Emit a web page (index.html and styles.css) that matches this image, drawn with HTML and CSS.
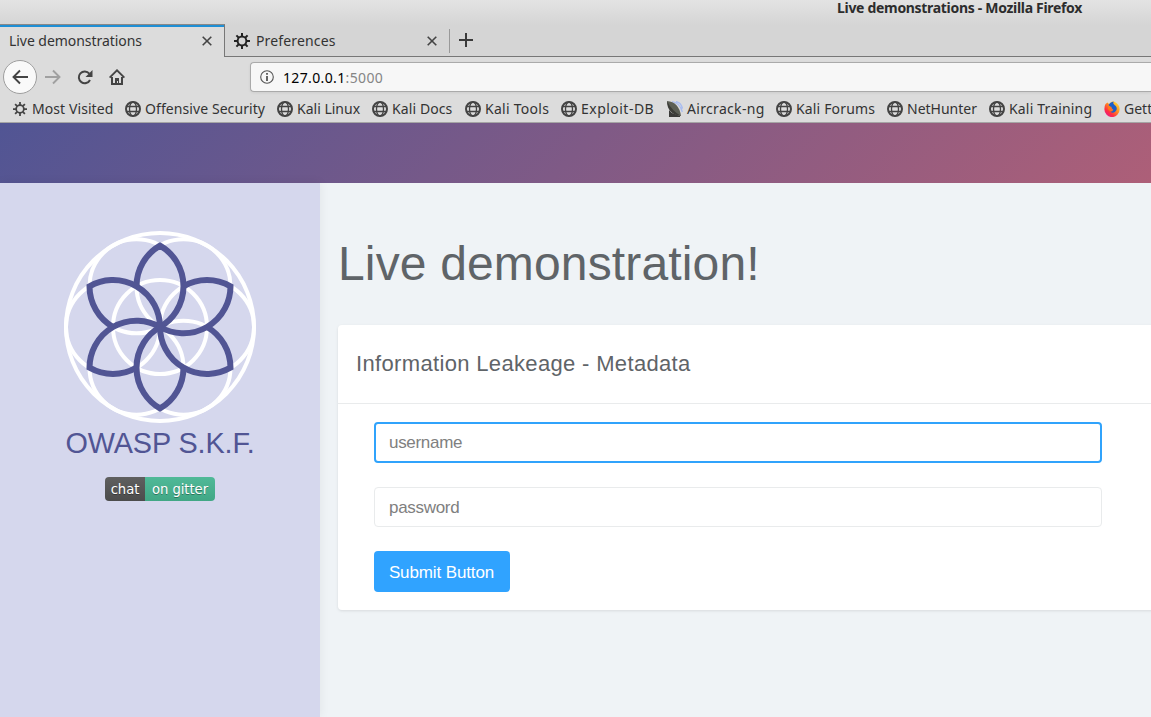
FILE: index.html
```html
<!DOCTYPE html>
<html lang="en">
<head>
<meta charset="utf-8">
<title>Live demonstrations</title>
<link rel="stylesheet" href="styles.css">
</head>
<body>
<svg class="defs" aria-hidden="true">
  <symbol id="globe" viewBox="0 0 16 16"><g fill="none" stroke="currentColor"><circle cx="8" cy="8" r="7" stroke-width="2"/><ellipse cx="8" cy="8" rx="3.5" ry="7" stroke-width="1.3"/><path d="M1.5 5.500h13M1.5 10.500h13" stroke-width="1.3"/></g></symbol>
  <symbol id="gear" viewBox="0 0 16 16"><g fill="none" stroke="currentColor" stroke-width="2"><circle cx="8" cy="8" r="4.400"/><path d="M8 0v3.500M8 12.500v3.500M0 8h3.500M12.500 8h3.500M2.400 2.400l2.400 2.400M11.200 11.200l2.400 2.400M13.600 2.400l-2.400 2.400M4.800 11.200l-2.400 2.400"/></g></symbol>
  <symbol id="close" viewBox="0 0 10 10"><path d="M.7.7l8.600 8.600M9.300.7L.7 9.300" fill="none" stroke="currentColor" stroke-width="1.600"/></symbol>
</svg>
<div class="titlebar"><span class="window-title">Live demonstrations - Mozilla Firefox</span></div>
<div class="tabs">
  <div class="tab active"><span class="tab-label">Live demonstrations</span><svg class="x"><use href="#close"/></svg></div>
  <div class="tab"><svg class="ico dark"><use href="#gear"/></svg><span class="tab-label wide">Preferences</span><svg class="x"><use href="#close"/></svg></div>
  <div class="newtab"><svg viewBox="0 0 14 14"><path d="M7 0v14M0 7h14" stroke="#3a3a3a" stroke-width="2"/></svg></div>
</div>
<div class="nav">
  <div class="back"><svg class="ico" viewBox="0 0 16 16"><path d="M16 8H1.500M8 1.500L1.500 8L8 14.500" fill="none" stroke="#444" stroke-width="1.900"/></svg></div>
  <svg class="ico fwd" viewBox="0 0 16 16"><path d="M0 8h14.500M8 1.500L14.500 8L8 14.500" fill="none" stroke="#a0a0a0" stroke-width="1.900"/></svg>
  <svg class="ico reload" viewBox="0 0 16 16"><path d="M12.300 4.600A5.900 5.900 0 1 0 13 11" fill="none" stroke="#444" stroke-width="2"/><path d="M15.500 1v7h-7z" fill="#444"/></svg>
  <svg class="ico home" viewBox="0 0 16 16"><path d="M.6 8.700L8 1.300l7.400 7.400" fill="none" stroke="#444" stroke-width="1.900"/><path d="M3 8v7h10V8" fill="none" stroke="#444" stroke-width="2"/><path d="M6 9h4v6H6z" fill="#444"/><path d="M8 12h1v2H8z" fill="#ddd"/></svg>
  <div class="url"><svg class="info" viewBox="0 0 14 14"><circle cx="7" cy="7" r="6.300" fill="none" stroke="#555" stroke-width="1.100"/><path d="M7 3v1.800M7 6v5" stroke="#555" stroke-width="1.800"/></svg><span class="addr">127.0.0.1<i>:5000</i></span></div>
</div>
<div class="bookmarks">
  <div class="bm visited"><svg class="ico"><use href="#gear"/></svg><span>Most Visited</span></div>
  <div class="bm security"><svg class="ico"><use href="#globe"/></svg><span>Offensive Security</span></div>
  <div class="bm linux"><svg class="ico"><use href="#globe"/></svg><span>Kali Linux</span></div>
  <div class="bm docs"><svg class="ico"><use href="#globe"/></svg><span>Kali Docs</span></div>
  <div class="bm tools"><svg class="ico"><use href="#globe"/></svg><span>Kali Tools</span></div>
  <div class="bm exploit"><svg class="ico"><use href="#globe"/></svg><span>Exploit-DB</span></div>
  <div class="bm aircrack"><svg class="ico" viewBox="0 0 16 16"><path d="M5 .7Q13 2 15.300 11M9 .5q5 1 6.500 7" fill="none" stroke="#a9bdf0" stroke-width="1.300"/><path d="M0 0Q12 1 14 15L9 14Q1 10 0 0" fill="#5c5f56"/><path d="M0 0Q0 13 14 15Q5 10 0 0" fill="#3c3d38"/><path d="M2 9l3 3l8 3v1H2z" fill="#3a3a38"/></svg><span>Aircrack-ng</span></div>
  <div class="bm forums"><svg class="ico"><use href="#globe"/></svg><span>Kali Forums</span></div>
  <div class="bm hunter"><svg class="ico"><use href="#globe"/></svg><span>NetHunter</span></div>
  <div class="bm training"><svg class="ico"><use href="#globe"/></svg><span>Kali Training</span></div>
  <div class="bm"><svg class="ico" viewBox="0 0 16 16"><defs><linearGradient id="fx" x1="1" y1="0" x2=".2" y2="1"><stop offset="0" stop-color="#fff044"/><stop offset=".45" stop-color="#ff9020"/><stop offset=".75" stop-color="#ff3040"/><stop offset="1" stop-color="#e8158c"/></linearGradient></defs><path d="M1.500 3l2-1.500L5 3l3-2.500h2q6 3 5.600 8a7.500 7.500 0 0 1-15.200 0Q.3 5 1.500 3z" fill="url(#fx)"/><path d="M4.500 4q1.500-3 5-3.500q-1 2 1 3.500q3 2 2 5q-2 4-6 2l3-2z" fill="#1b5fc8"/><path d="M4 5l4 1-2 2 3 2q-3 1-5-2z" fill="#ff7a18"/></svg><span>Gett</span></div>
</div>
<div class="banner"></div>
<div class="page">
  <aside class="side">
    <svg class="logo" viewBox="-96 -96 192 192">
      <defs><path id="petal" d="M-23.500-40.700A47 47 0 0 1 0-81.400A47 47 0 0 1 0 0"/></defs>
      <g fill="none" stroke="#fff" stroke-width="4"><circle r="94"/><circle r="47"/><circle cx="47" r="47"/><circle cx="-47" r="47"/><circle cx="23.500" cy="-40.700" r="47"/><circle cx="-23.500" cy="-40.700" r="47"/><circle cx="23.500" cy="40.700" r="47"/><circle cx="-23.500" cy="40.700" r="47"/></g>
      <g fill="none" stroke="#515594" stroke-width="6"><use href="#petal"/><use href="#petal" transform="rotate(60)"/><use href="#petal" transform="rotate(120)"/><use href="#petal" transform="rotate(180)"/><use href="#petal" transform="rotate(240)"/><use href="#petal" transform="rotate(300)"/></g>
    </svg>
    <div class="brand">OWASP S.K.F.</div>
    <div class="badge"><span class="chat">chat</span><span class="gitter">on gitter</span></div>
  </aside>
  <main class="main">
    <h1>Live demonstration!</h1>
    <section class="card">
      <h2>Information Leakeage - Metadata</h2>
      <form class="form">
        <input class="field focus" type="text" placeholder="username">
        <input class="field" type="password" placeholder="password">
        <button class="submit" type="button">Submit Button</button>
      </form>
    </section>
  </main>
</div>
</body>
</html>
```
FILE: styles.css
```css
* { box-sizing: border-box; }
body { margin: 0; width: 1151px; height: 717px; overflow: hidden; display: flex; flex-direction: column; font-family: "Liberation Sans", Arial, sans-serif; background: linear-gradient(#e3e3e3, #d5d5d5 25px); }
.defs { position: absolute; width: 0; height: 0; }
.ico { width: 16px; height: 16px; flex: none; color: #444; }
.dark { color: #222; }
.titlebar, .tabs, .nav, .bookmarks { font-family: "Noto Sans", sans-serif; font-size: 14px; color: #333; white-space: nowrap; flex: none; }
.titlebar { height: 24px; padding-left: 837px; line-height: 16px; font-weight: bold; color: #2d2d2d; letter-spacing: -.31px; }
.tabs { height: 33px; display: flex; }
.tab { width: 225px; display: flex; align-items: center; padding: 1px 13px 0 9px; border-bottom: 1px solid #777; }
.tab.active { background: #dcdcdc; border-top: 1px solid #888; border-right: 1px solid #777; border-bottom: 0; box-shadow: inset 0 2px #1e8fd5; padding: 0 12px 1px 9px; }
.tab-label { letter-spacing: -.05px; }
.tab-label.wide { letter-spacing: .15px; }
.tab .ico { margin-right: 6px; }
.x { width: 10px; height: 10px; margin-left: auto; color: #444; }
.newtab { flex: 1; border-bottom: 1px solid #777; padding: 5px 0 3px; margin-left: -1px; }
.newtab svg { display: block; box-sizing: content-box; width: 14px; height: 14px; padding: 4px 9px 6px; border-left: 1px solid #999; }
.nav { height: 38px; background: #dcdcdc; display: flex; align-items: center; padding: 2px 0 0 3px; }
.back { width: 34px; height: 34px; border: 1px solid #9e9e9e; border-radius: 50%; background: #f9f9f9; display: grid; place-items: center; }
.fwd { margin-left: 8px; }
.reload, .home { margin-left: 16px; }
.url { margin-left: 125px; flex: 1; height: 30px; border: 1px solid #aaa; border-right: 0; border-radius: 4px 0 0 4px; background: #f7f7f7; display: flex; align-items: center; padding-left: 9px; box-shadow: 0 1px 3px #0001; }
.info { width: 14px; height: 14px; margin-right: 9px; }
.addr { color: #000; letter-spacing: .36px; }
.addr i { color: #858585; font-style: normal; }
.bookmarks { height: 28px; background: #dcdcdc; border-bottom: 1px solid #a5a5a5; display: flex; align-items: center; padding-left: 12px; }
.bm { display: flex; align-items: center; gap: 4px; flex: none; }
.visited { width: 113px; letter-spacing: .08px; }
.visited .ico { padding: 1px; }
.security { width: 152px; letter-spacing: .08px; }
.linux { width: 95px; }
.docs { width: 93px; letter-spacing: .1px; }
.tools { width: 96px; letter-spacing: .27px; }
.exploit { width: 106px; letter-spacing: .48px; }
.aircrack { width: 109px; letter-spacing: .32px; }
.forums { width: 111px; letter-spacing: .16px; }
.hunter { width: 102px; }
.training { width: 115px; letter-spacing: .17px; }
.banner { height: 60px; flex: none; background: linear-gradient(135deg, #515594, #ad5f78); }
.page { flex: 1; min-height: 0; display: flex; background: #eff3f6; }
.side { width: 320px; flex: none; background: #d5d7ed; display: flex; flex-direction: column; align-items: center; padding-top: 48px; box-shadow: 0 0 10px #0001; }
.logo { width: 192px; height: 192px; }
.brand { font-size: 28.8px; line-height: 33px; letter-spacing: -.1px; margin-top: 4px; color: #515594; }
.badge { margin-top: 17px; height: 24px; display: flex; border-radius: 4px; overflow: hidden; font: 13.2px/25px "DejaVu Sans", sans-serif; letter-spacing: -.05px; color: #fff; text-shadow: 0 1px #0005; }
.chat { width: 40px; text-align: center; background: linear-gradient(#5f5f5f, #4c4c4c); }
.gitter { width: 70px; text-align: center; background: linear-gradient(#50b998, #41a785); }
.main { flex: 1; min-width: 0; padding: 53px 0 0 18px; overflow: hidden; }
h1 { margin: 0 0 33px; font-weight: 400; font-size: 48px; line-height: 56px; letter-spacing: .15px; color: #5f6468; white-space: nowrap; }
.card { width: 830px; height: 285px; background: #fff; border-radius: 4px; box-shadow: 0 1px 3px #0000001a; }
h2 { margin: 0; height: 79px; padding: 0 18px; font-weight: 400; font-size: 22px; line-height: 78px; letter-spacing: .34px; color: #5f6468; border-bottom: 1px solid #e9ebec; }
.form { padding: 18px 36px; display: flex; flex-direction: column; align-items: flex-start; }
.field { width: 728px; height: 40px; margin-bottom: 24px; padding: 1px 14px 0; border: 1px solid #e9ebec; border-radius: 4px; font: 17px "Liberation Sans", sans-serif; letter-spacing: -.3px; outline: 0; }
.field::placeholder { color: #808080; opacity: 1; }
.focus { height: 41px; border: 2px solid #30a3fc; padding: 0 13px; }
.submit { width: 136px; height: 41px; padding: 2px 1px 0 0; border: 0; border-radius: 4px; background: #30a3ff; color: #fff; font: 17px "Liberation Sans", sans-serif; letter-spacing: -.12px; }
```
